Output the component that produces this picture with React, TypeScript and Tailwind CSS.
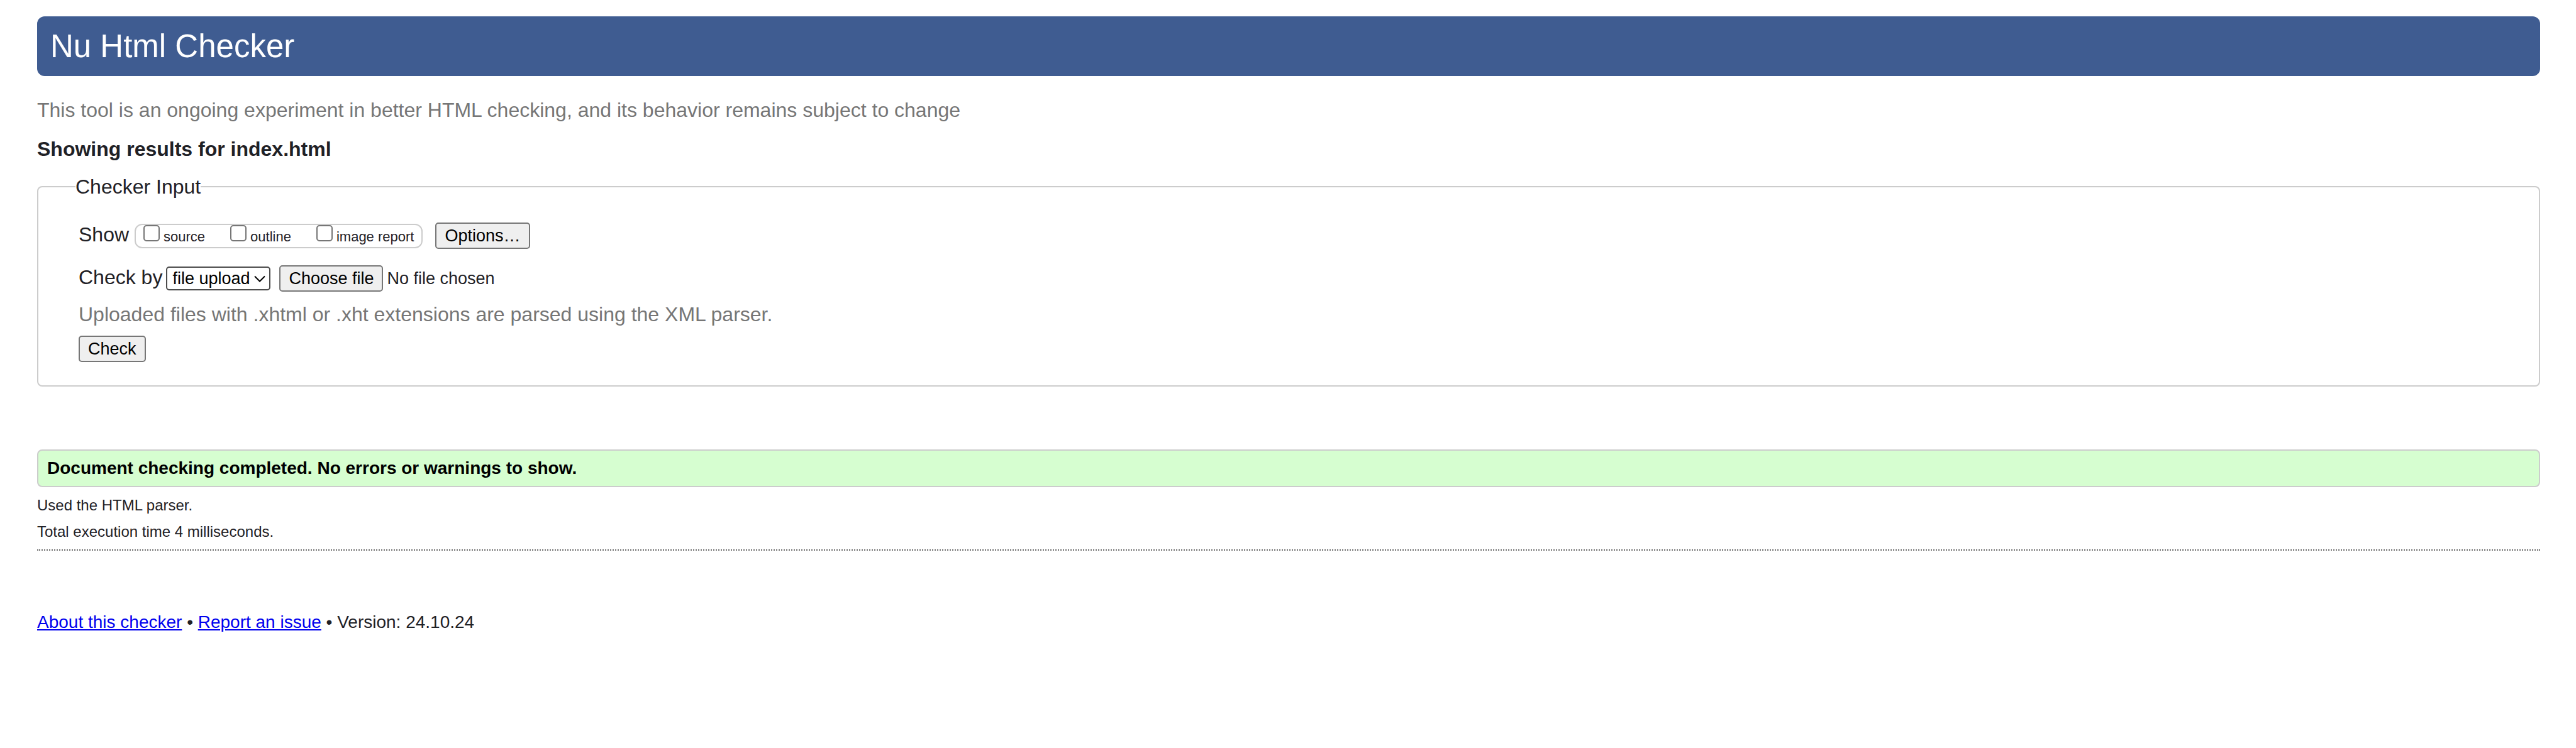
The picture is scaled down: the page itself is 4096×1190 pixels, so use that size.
import { useRef } from "react";

const SHOW_OPTIONS = ["source", "outline", "image report"];

const BUTTON =
  "h-[42px] shrink-0 rounded-[5px] border-2 border-[#767676] bg-[#efefef] px-[13px] text-[27px] leading-[38px] text-black";

function ShowOptions() {
  return (
    <div className="ml-[9px] flex h-[39px] items-baseline gap-[40px] rounded-[12px] border-2 border-[#cccccc] px-[12px]">
      {SHOW_OPTIONS.map((name) => (
        <label key={name} className="flex items-baseline gap-[6px] text-[22px] leading-[34px]">
          <input
            type="checkbox"
            name={name}
            className="size-[26px] appearance-none rounded-[5px] border-2 border-[#767676] bg-white checked:bg-[#0075ff]"
          />
          {name}
        </label>
      ))}
    </div>
  );
}

function MethodSelect() {
  return (
    <div className="relative ml-[6px] flex items-baseline">
      <select
        id="docselect"
        className="h-[38px] w-[166px] appearance-none rounded-[5px] border-2 border-[#4c4c4c] bg-white pl-[8px] text-[27px] leading-[34px] text-black"
      >
        <option>file upload</option>
        <option>address</option>
        <option>text input</option>
      </select>
      <svg
        viewBox="0 0 18 12"
        className="pointer-events-none absolute top-[14px] right-[8px] h-[12px] w-[18px]"
        fill="none"
        stroke="#000000"
        strokeWidth="2"
        aria-hidden="true"
      >
        <path d="M1 1.5 L9 9.5 L17 1.5" />
      </svg>
    </div>
  );
}

function FilePicker() {
  const file = useRef<HTMLInputElement>(null);
  return (
    <div className="ml-[14px] flex items-baseline gap-[6px]">
      <button type="button" className={BUTTON} onClick={() => file.current?.click()}>
        Choose file
      </button>
      <input ref={file} type="file" aria-label="Choose file" className="hidden" />
      <span className="text-[27px] leading-[38px]">No file chosen</span>
    </div>
  );
}

export default function App() {
  return (
    <div className="min-h-screen bg-white pt-[26px] pr-[57px] pl-[59px] font-['Liberation_Sans',Arial,sans-serif] text-[32px] leading-[40px] text-[#1f2126]">
      <h1 className="rounded-[12px] bg-[#3f5c91] px-[21px] text-[51px] leading-[95px] text-white">
        Nu Html Checker
      </h1>
      <p className="mt-[34px] text-[#767676]">
        This tool is an ongoing experiment in better HTML checking, and its behavior remains subject to change
      </p>
      <h2 className="mt-[22px] font-bold">Showing results for index.html</h2>

      <form onSubmit={(event) => event.preventDefault()}>
        <fieldset className="mt-[20px] rounded-[8px] border-2 border-[#cccccc] px-[59px] pb-[37px]">
          <legend>Checker Input</legend>
          <div className="px-[5px] pt-[37px]">
            <div className="flex items-baseline leading-[38px]">
              <span>Show</span>
              <ShowOptions />
              <button type="button" className={`${BUTTON} ml-[20px]`}>
                Options…
              </button>
            </div>
            <div className="mt-[26px] flex items-baseline leading-[38px]">
              <label htmlFor="docselect">Check by</label>
              <MethodSelect />
              <FilePicker />
            </div>
            <p className="mt-[16px] text-[#767676]">
              Uploaded files with .xhtml or .xht extensions are parsed using the XML parser.
            </p>
            <button type="submit" className={`${BUTTON} mt-[14px] block`}>
              Check
            </button>
          </div>
        </fieldset>
      </form>

      <p className="mt-[100px] rounded-[8px] border-2 border-[#cccccc] bg-[#d6fed0] px-[14px] text-[28px] leading-[56px] font-bold text-black">
        Document checking completed. No errors or warnings to show.
      </p>
      <p className="mt-[13px] text-[24px] leading-[32px]">Used the HTML parser.</p>
      <p className="mt-[10px] text-[24px] leading-[32px]">Total execution time 4 milliseconds.</p>
      <hr className="mt-[12px] border-t-2 border-dotted border-[#666666]" />

      <p className="mt-[94px] text-[28px]">
        <a href="#about" className="text-[#0000ee] underline">
          About this checker
        </a>{" "}
        •{" "}
        <a href="#issue" className="text-[#0000ee] underline">
          Report an issue
        </a>{" "}
        • Version: 24.10.24
      </p>
    </div>
  );
}
